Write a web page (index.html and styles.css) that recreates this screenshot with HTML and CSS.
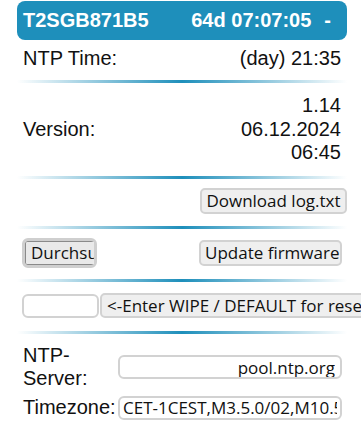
FILE: index.html
```html
<!DOCTYPE html>
<html>
<head>
<meta charset="utf-8">
<link rel="stylesheet" href="styles.css">
</head>
<body>
<div class="wrap">
  <div class="header">
    <span>T2SGB871B5</span>
    <span>64d 07:07:05<span class="dash">-</span></span>
  </div>
  <div class="row row-ntp">
    <span>NTP Time:</span>
    <span>(day) 21:35</span>
  </div>
  <hr class="sep">
  <div class="row row-version">
    <span>Version:</span>
    <span class="multi">1.14<br>06.12.2024<br>06:45</span>
  </div>
  <hr class="sep">
  <div class="row row-download">
    <button class="btn btn-download">Download log.txt</button>
  </div>
  <hr class="sep">
  <div class="row row-firmware">
    <span class="file"><span class="file-btn">Durchsuchen…</span></span>
    <button class="btn btn-update">Update firmware</button>
  </div>
  <hr class="sep">
  <div class="row row-wipe">
    <input class="field field-wipe" type="text">
    <button class="btn btn-wipe">&lt;-Enter WIPE / DEFAULT for reset</button>
  </div>
  <hr class="sep">
  <div class="form">
    <label class="lbl">NTP-Server:</label>
    <input class="field field-right" type="text" value="pool.ntp.org">
    <label class="lbl">Timezone:</label>
    <input class="field" type="text" value="CET-1CEST,M3.5.0/02,M10.5.0/03">
  </div>
</div>
</body>
</html>
```
FILE: styles.css
```css
html, body {
  margin: 0;
  padding: 0;
  overflow: hidden;
  background: #fff;
}
body {
  font-family: "Liberation Sans", Arial, sans-serif;
  font-size: 20px;
  color: #111;
}
.wrap {
  width: 330px;
  margin-left: 17px;
  padding-top: 1px;
}
.header {
  height: 39px;
  background: #1e8fbb;
  border-radius: 8px;
  color: #fff;
  font-weight: bold;
  display: flex;
  align-items: center;
  justify-content: space-between;
  padding: 0 16px 0 6px;
  box-sizing: border-box;
}
.dash {
  margin-left: 13px;
}
.sep {
  height: 3px;
  border: 0;
  margin: 0;
  background: linear-gradient(to right, #fff, #1e8fbb, #fff);
}
.row {
  display: flex;
  align-items: center;
  justify-content: space-between;
  padding: 0 6px;
  line-height: 23px;
}
.row-ntp {
  padding-top: 7px;
  padding-bottom: 10px;
}
.row-version {
  padding-top: 11px;
  padding-bottom: 11px;
}
.multi {
  text-align: right;
  line-height: 23.5px;
}
.row-download {
  justify-content: flex-end;
  padding: 9.5px 0 12px;
}
.row-firmware {
  padding: 9px 5px 11px 5px;
}
.row-wipe {
  justify-content: flex-start;
  padding: 11px 0 13px 5px;
  width: 420px;
}
.btn {
  font-family: "Open Sans", "DejaVu Sans", sans-serif;
  font-size: 17px;
  color: #111;
  background: #efefef;
  border: 2px solid #d2d2d2;
  border-radius: 5px;
  padding: 0 4px;
  margin: 0;
  line-height: 20px;
  white-space: nowrap;
}
.btn-download {
  height: 26px;
  width: 147px;
}
.btn-update {
  height: 26px;
  width: 143px;
}
.btn-wipe {
  height: 25px;
  margin-left: 1px;
  text-align: left;
  padding-left: 5px;
}
.file {
  display: inline-block;
  width: 75px;
  height: 30px;
  box-sizing: border-box;
  border: 3px solid #cfcfcf;
  border-radius: 6px;
  overflow: hidden;
  background: #fff;
}
.file-btn {
  display: block;
  height: 24px;
  width: 130px;
  box-sizing: border-box;
  border: 1px solid #8a8a8a;
  border-radius: 2px;
  background: #e9e9e9;
  font-family: "Open Sans", "DejaVu Sans", sans-serif;
  font-size: 17px;
  line-height: 22px;
  padding-left: 5px;
  white-space: nowrap;
}
.field {
  font-family: "Open Sans", "DejaVu Sans", sans-serif;
  font-size: 17px;
  color: #111;
  height: 24px;
  box-sizing: border-box;
  border: 2px solid #d2d2d2;
  border-radius: 6px;
  background: #fff;
  padding: 0 3px;
  margin: 0;
  width: 224px;
  outline: none;
}
.field-wipe {
  width: 77px;
}
.field-right {
  text-align: right;
  padding-right: 5px;
}
.form {
  display: grid;
  grid-template-columns: 94px 224px;
  column-gap: 1px;
  row-gap: 5px;
  align-items: center;
  padding: 9.5px 0 0 6px;
  line-height: 23.5px;
}
.lbl {
  display: block;
}
```
